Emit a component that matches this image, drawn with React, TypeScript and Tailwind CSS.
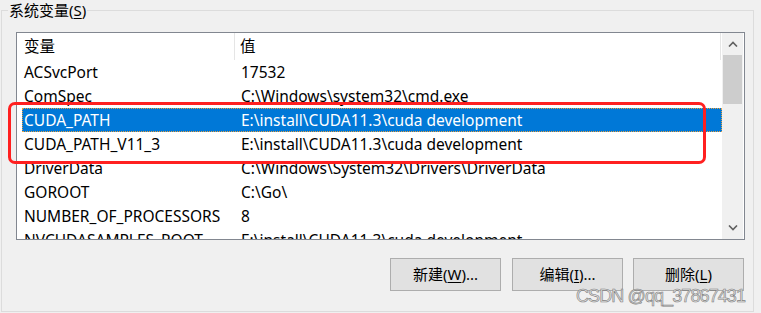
import React from 'react';

const rows = [
  { name: 'ACSvcPort', value: '17532' },
  { name: 'ComSpec', value: 'C:\\Windows\\system32\\cmd.exe' },
  { name: 'CUDA_PATH', value: 'E:\\install\\CUDA11.3\\cuda development', selected: true },
  { name: 'CUDA_PATH_V11_3', value: 'E:\\install\\CUDA11.3\\cuda development' },
  { name: 'DriverData', value: 'C:\\Windows\\System32\\Drivers\\DriverData' },
  { name: 'GOROOT', value: 'C:\\Go\\' },
  { name: 'NUMBER_OF_PROCESSORS', value: '8' },
  { name: 'NVCUDASAMPLES_ROOT', value: 'E:\\install\\CUDA11.3\\cuda development' },
];

function Chevron({ up }: { up?: boolean }) {
  return (
    <svg width="10" height="6" viewBox="0 0 10 6">
      <path
        d={up ? 'M1 5.5 L5 1.5 L9 5.5' : 'M1 0.5 L5 4.5 L9 0.5'}
        fill="none"
        stroke="#606060"
        strokeWidth="1.6"
      />
    </svg>
  );
}

function WinButton({ label, hot, tail }: { label: string; hot: string; tail: string }) {
  return (
    <button className="w-[111px] h-[33px] bg-[#e1e1e1] border border-[#adadad] text-[15px] text-black flex items-center justify-center">
      <span>
        {label}(<span className="underline underline-offset-2">{hot}</span>){tail}
      </span>
    </button>
  );
}

export default function App() {
  return (
    <div
      className="w-[761px] h-[313px] bg-[#f0f0f0] relative overflow-hidden pl-[1px] pt-[1px]"
      style={{ fontFamily: '"Noto Sans", "Noto Sans CJK SC", sans-serif' }}
    >
      {/* group box */}
      <fieldset className="w-[753px] h-[311px] border border-[#dcdcdc]">
        <legend className="ml-[6px] px-[1px] text-[15px] leading-[19px] text-black">
          系统变量(<span className="underline underline-offset-2">S</span>)
        </legend>

        {/* list view */}
        <div className="mt-[12px] ml-[14px] w-[729px] h-[208px] border border-[#828790] bg-white flex overflow-hidden">
          <div className="w-[705px] h-full overflow-hidden">
            <div className="h-[27px] flex text-[15.5px] text-black">
              <div className="w-[218px] pl-[7px] pt-[1px] flex items-center border-r border-[#e5e5e5]">变量</div>
              <div className="w-[486px] pl-[5px] pt-[1px] flex items-center border-r border-[#e5e5e5]">值</div>
            </div>
            {rows.map((r) => (
              <div
                key={r.name}
                className={
                  r.selected
                    ? 'ml-[5px] w-[700px] h-[24px] pt-[2px] flex items-center text-[15.5px] text-white bg-[#0078d7] border border-dotted border-[#e8a040]'
                    : 'ml-[5px] w-[700px] h-[24px] pt-[2px] flex items-center text-[15.5px] text-black border border-transparent'
                }
              >
                <div className="w-[212px] pl-[1px] whitespace-nowrap">{r.name}</div>
                <div className="pl-[6px] whitespace-nowrap">{r.value}</div>
              </div>
            ))}
          </div>

          {/* scrollbar */}
          <div className="w-[21px] h-full bg-[#f0f0f0] flex flex-col">
            <div className="h-[22px] flex items-center justify-center">
              <Chevron up />
            </div>
            <div className="mx-[1px] h-[49px] bg-[#cdcdcd]" />
            <div className="flex-1" />
            <div className="h-[22px] flex items-center justify-center">
              <Chevron />
            </div>
          </div>
        </div>

        {/* buttons */}
        <div className="mt-[18px] ml-[388px] flex">
          <WinButton label="新建" hot="W" tail="..." />
          <div className="ml-[11px]">
            <WinButton label="编辑" hot="I" tail="..." />
          </div>
          <div className="ml-[10px]">
            <WinButton label="删除" hot="L" tail="" />
          </div>
        </div>
      </fieldset>

      {/* red annotation box */}
      <div className="absolute left-[8px] top-[102px] w-[698px] h-[62px] border-[3px] border-[#ff2020] rounded-[7px]" />

      {/* watermark */}
      <div
        className="absolute left-[576px] top-[286px] text-[18px] leading-[20px] tracking-[-0.9px] text-[#e2e2e2] whitespace-nowrap [-webkit-text-stroke:0.6px_#808080]"
        style={{ fontFamily: '"Liberation Sans", Arial, sans-serif' }}
      >
        CSDN @qq_37867431
      </div>
    </div>
  );
}
